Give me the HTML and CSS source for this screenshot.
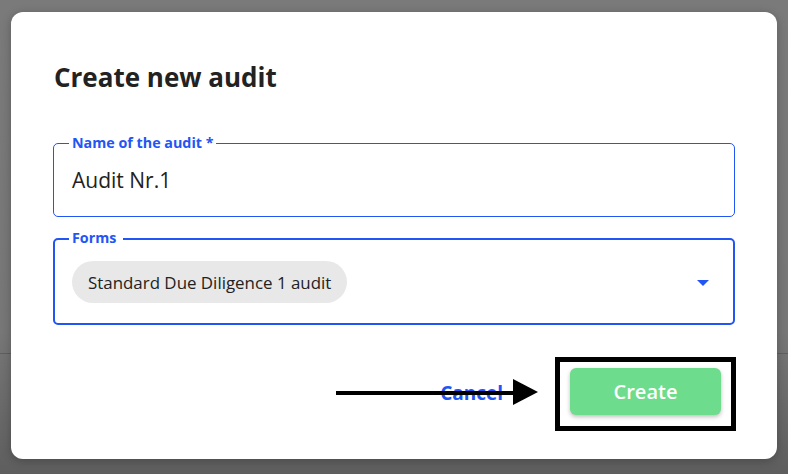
FILE: index.html
```html
<!DOCTYPE html>
<html>
<head>
<meta charset="utf-8">
<link rel="stylesheet" href="styles.css">
</head>
<body>
<div class="backdrop">
  <div class="bg-line"></div>
  <div class="dialog">
    <h1 class="title">Create new audit</h1>
    <div class="field field-name">
      <span class="field-label">Name of the audit *</span>
      <div class="field-value">Audit Nr.1</div>
    </div>
    <div class="field field-focused">
      <span class="field-label">Forms</span>
      <div class="select-row">
        <span class="chip">Standard Due Diligence 1 audit</span>
        <svg class="caret" width="12" height="6" viewBox="0 0 12 6"><path d="M0 0 L12 0 L6 6 Z" fill="#2255f5"/></svg>
      </div>
    </div>
    <div class="actions">
      <span class="cancel">Cancel</span>
      <div class="highlight">
        <button class="create">Create</button>
      </div>
    </div>
    <svg class="pointer" width="206" height="28" viewBox="0 0 206 28"><rect x="0" y="12" width="182" height="4" fill="#000"/><path d="M177 0 L202 13 L177 26 Z" fill="#000"/></svg>
  </div>
</div>
</body>
</html>
```
FILE: styles.css
```css
* { box-sizing: border-box; }
html, body { margin: 0; padding: 0; }
body {
  width: 788px;
  height: 474px;
  overflow: hidden;
  font-family: "Open Sans", "Noto Sans", sans-serif;
}
.backdrop {
  position: relative;
  width: 788px;
  height: 474px;
  background: linear-gradient(180deg, #7a7a7a 0%, #777 70%, #5e5e5e 100%);
  padding: 12px 11px 0 11px;
}
.bg-line {
  position: absolute;
  left: 0;
  right: 0;
  top: 353px;
  height: 1px;
  background: #5f5f5f;
}
.dialog {
  position: relative;
  width: 766px;
  height: 447px;
  background: #fff;
  border-radius: 12px;
  padding: 48px 42px 0 42px;
  box-shadow: 0 2px 10px rgba(0,0,0,0.25);
}
.title {
  margin: 0;
  font-size: 26px;
  font-weight: 700;
  color: #222;
  line-height: 34px;
  padding-left: 1px;
}
.field {
  position: relative;
  border: 1px solid #2255f5;
  border-radius: 5px;
  padding: 0 18px;
}
.field-name {
  margin-top: 49px;
  height: 74px;
  padding-top: 23px;
}
.field-focused {
  margin-top: 21px;
  border-width: 2px;
  height: 87px;
  padding: 21px 17px 0 17px;
}
.field-label {
  position: absolute;
  left: 15px;
  top: -9px;
  background: #fff;
  color: #2255f5;
  font-weight: 700;
  font-size: 14.3px;
  padding: 0 3px;
  line-height: 16px;
}
.field-focused .field-label { top: -10px; left: 14px; padding-right: 7px; }
.field-value {
  font-size: 21px;
  color: #222;
  line-height: 26px;
}
.select-row {
  display: flex;
  align-items: center;
  justify-content: space-between;
  padding-right: 7px;
}
.chip {
  background: #e8e8e8;
  border-radius: 21px;
  height: 42px;
  padding: 0 16px;
  display: flex;
  align-items: center;
  font-size: 16.9px;
  color: #222;
}
.caret { display: block; margin-top: 2px; }
.actions {
  display: flex;
  align-items: center;
  justify-content: flex-end;
  margin-top: 32px;
  margin-right: -1px;
}
.cancel {
  color: #2255f5;
  font-weight: 700;
  font-size: 19px;
  margin-right: 52px;
  margin-top: -3px;
}
.highlight {
  border: 5px solid #000;
  width: 181px;
  height: 74px;
  padding: 6px 10px 0 10px;
}
.create {
  display: block;
  width: 151px;
  height: 47px;
  border: none;
  border-radius: 6px;
  background: #6ddc8c;
  color: #fff;
  font-family: inherit;
  font-size: 20px;
  font-weight: 600;
  box-shadow: 0 2px 4px rgba(0,0,0,0.25);
}
.pointer {
  position: absolute;
  left: 325px;
  top: 367px;
}
```
